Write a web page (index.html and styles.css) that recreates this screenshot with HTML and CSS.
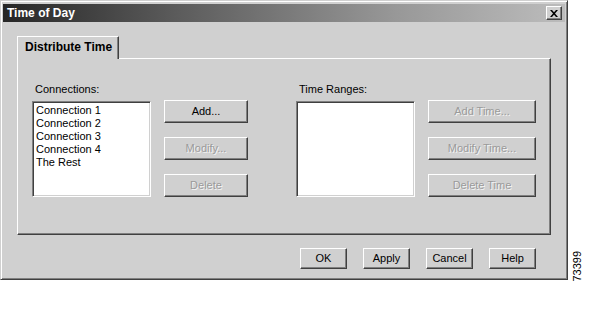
FILE: index.html
```html
<!DOCTYPE html>
<html>
<head>
<meta charset="utf-8">
<title>Time of Day</title>
<link rel="stylesheet" href="styles.css">
</head>
<body>
<div class="page">
  <div class="dialog">
    <div class="titlebar">
      <span class="title">Time of Day</span>
      <span class="close">
        <svg width="8" height="7" viewBox="0 0 8 7"><path d="M0 0h2l2 2.2L6 0h2L5 3.5 8 7H6L4 4.8 2 7H0l3-3.5z" fill="#000"/></svg>
      </span>
    </div>
    <div class="tabs">
      <div class="tab">Distribute Time</div>
      <div class="panel">
        <div class="group">
          <div class="label">Connections:</div>
          <div class="row">
            <div class="list list-conn">
              <div class="item">Connection 1</div>
              <div class="item">Connection 2</div>
              <div class="item">Connection 3</div>
              <div class="item">Connection 4</div>
              <div class="item">The Rest</div>
            </div>
            <div class="btns btns-conn">
              <div class="btn">Add...</div>
              <div class="btn disabled">Modify...</div>
              <div class="btn disabled">Delete</div>
            </div>
          </div>
        </div>
        <div class="group">
          <div class="label">Time Ranges:</div>
          <div class="row">
            <div class="list"></div>
            <div class="btns btns-time">
              <div class="btn disabled">Add Time...</div>
              <div class="btn disabled">Modify Time...</div>
              <div class="btn disabled">Delete Time</div>
            </div>
          </div>
        </div>
      </div>
    </div>
    <div class="footer">
      <div class="btn fbtn">OK</div>
      <div class="btn fbtn">Apply</div>
      <div class="btn fbtn">Cancel</div>
      <div class="btn fbtn">Help</div>
    </div>
  </div>
  <div class="fignum">73399</div>
</div>
</body>
</html>
```

FILE: styles.css
```css
html, body {
  margin: 0;
  padding: 0;
  background: #fff;
}
body {
  font-family: "Liberation Sans", Arial, sans-serif;
  font-size: 11px;
  color: #000;
}
.page {
  display: flex;
  align-items: flex-end;
  width: 611px;
  height: 309px;
}
.dialog {
  box-sizing: border-box;
  width: 568px;
  height: 280px;
  align-self: flex-start;
  background: #d0d0d0;
  border: 1px solid;
  border-color: #d0d0d0 #404040 #404040 #d0d0d0;
  box-shadow: inset 1px 1px #fff, inset -1px -1px #808080;
  padding: 3px 2px 2px 2px;
}
.titlebar {
  height: 18px;
  display: flex;
  align-items: center;
  justify-content: space-between;
  padding: 0 3px 0 4px;
  background: linear-gradient(to right, #262626 0%, #5a5a5a 30%, #989898 70%, #bcbcbc 100%);
}
.title {
  color: #fff;
  font-weight: bold;
  font-size: 12px;
  line-height: 14px;
}
.close {
  box-sizing: border-box;
  width: 16px;
  height: 14px;
  display: flex;
  align-items: center;
  justify-content: center;
  background: #d0d0d0;
  border: 1px solid;
  border-color: #fff #404040 #404040 #fff;
  box-shadow: inset -1px -1px #808080;
}
.tabs {
  margin: 14px 0 0 14px;
  width: 534px;
}
.tab {
  position: relative;
  z-index: 1;
  box-sizing: border-box;
  width: 102px;
  height: 23px;
  margin-bottom: -1px;
  padding: 3px 0 0 7px;
  background: #d0d0d0;
  border-top: 1px solid #fff;
  border-left: 1px solid #fff;
  border-right: 1px solid #404040;
  box-shadow: inset -1px 0 #808080;
  font-weight: bold;
  font-size: 12px;
  line-height: 14px;
}
.panel {
  box-sizing: border-box;
  height: 177px;
  border: 1px solid;
  border-color: #fff #404040 #404040 #fff;
  box-shadow: inset -1px -1px #808080;
  padding: 24px 0 0 14px;
  display: flex;
  gap: 48px;
}
.label {
  line-height: 13px;
  padding-left: 3px;
  margin-bottom: 4px;
}
.row {
  display: flex;
  align-items: flex-end;
  gap: 13px;
}
.list {
  box-sizing: border-box;
  width: 119px;
  height: 96px;
  background: #fff;
  border: 1px solid;
  border-color: #808080 #fff #fff #808080;
  box-shadow: inset 1px 1px #404040, inset -1px -1px #d0d0d0;
  padding: 2px 3px;
}
.item {
  line-height: 13px;
  white-space: nowrap;
}
.btns {
  height: 97px;
  display: flex;
  flex-direction: column;
  justify-content: space-between;
}
.btns-conn .btn { width: 84px; }
.btns-time .btn { width: 108px; }
.btn {
  box-sizing: border-box;
  height: 23px;
  display: flex;
  align-items: center;
  justify-content: center;
  background: #d0d0d0;
  border: 1px solid;
  border-color: #fff #404040 #404040 #fff;
  box-shadow: inset -1px -1px #808080;
  line-height: 13px;
  white-space: nowrap;
}
.btn.disabled {
  color: #9a9a9a;
  text-shadow: 1px 1px #f4f4f4;
}
.footer {
  display: flex;
  justify-content: flex-end;
  gap: 16px;
  margin-top: 13px;
  padding-right: 29px;
}
.fbtn {
  width: 47px;
  height: 21px;
}
.fignum {
  writing-mode: vertical-rl;
  transform: rotate(180deg);
  margin-left: 3px;
  margin-bottom: 27px;
  font-size: 11px;
  line-height: 12px;
}
```
